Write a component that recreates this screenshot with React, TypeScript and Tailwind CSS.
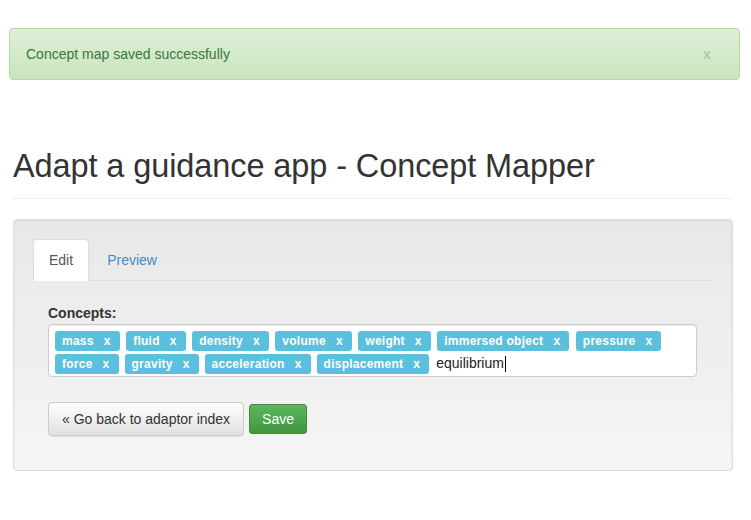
import { useState } from 'react'

const TAGS_ROW1 = ['mass', 'fluid', 'density', 'volume', 'weight', 'immersed object', 'pressure']
const TAGS_ROW2 = ['force', 'gravity', 'acceleration', 'displacement']

function Tag({ label }: { label: string }) {
  return (
    <span className="inline-flex h-5 items-center rounded-[3px] bg-[#5bc0de] pl-[7px] pr-[9px] text-[12px] font-bold leading-none tracking-[0.25px] text-white">
      {label}
      <span className="ml-[10px]">x</span>
    </span>
  )
}

export default function App() {
  const [tab, setTab] = useState('edit')

  return (
    <div className="min-h-[520px] bg-white pt-[28px] font-['Liberation_Sans',Arial,sans-serif] text-[14px] text-[#333]">
      {/* flash */}
      <div className="ml-[9px] mr-[11px] flex h-[52px] items-center justify-between rounded border border-[#b2dba1] bg-gradient-to-b from-[#dff0d8] to-[#c8e5bc] pl-[16px] pr-[28px] text-[#3c763d]">
        <span>Concept map saved successfully</span>
        <span className="text-[15px] font-bold text-[#b4c6ad]">x</span>
      </div>

      <div className="ml-[13px] mr-[18px]">
        <div className="mt-[66px] border-b border-[#eee] pb-[12px]">
          <h1 className="text-[32.5px] leading-[40px] font-normal tracking-[-0.1px] text-[#333]">Adapt a guidance app - Concept Mapper</h1>
        </div>

        <div className="mt-[20px] h-[252px] rounded border border-[#dcdcdc] bg-gradient-to-b from-[#e8e8e8] to-[#f5f5f5] p-[19px] shadow-[inset_0_1px_3px_rgba(0,0,0,0.05)]">
          <div className="flex border-b border-[#ddd]">
            <button
              onClick={() => setTab('edit')}
              className={`-mb-px h-[42px] rounded-t border px-[15px] ${tab === 'edit' ? 'border-[#ddd] border-b-transparent bg-white text-[#555]' : 'border-transparent text-[#428bca]'}`}
            >
              Edit
            </button>
            <button
              onClick={() => setTab('preview')}
              className={`-mb-px ml-[2px] h-[42px] rounded-t border px-[15px] ${tab === 'preview' ? 'border-[#ddd] border-b-transparent bg-white text-[#555]' : 'border-transparent text-[#428bca]'}`}
            >
              Preview
            </button>
          </div>

          <div className="pl-[15px] pr-[16px] pt-[22px]">
            <div className="text-[14px] font-bold leading-[20px] text-[#333]">Concepts:</div>
            <div className="mt-[1px] flex h-[53px] flex-col gap-[2px] rounded border border-[#ccc] bg-white px-[6px] pt-[6px] shadow-[inset_0_1px_1px_rgba(0,0,0,0.075)]">
              <div className="flex gap-[6.5px]">
                {TAGS_ROW1.map((t) => (
                  <Tag key={t} label={t} />
                ))}
              </div>
              <div className="flex items-center gap-[6px]">
                {TAGS_ROW2.map((t) => (
                  <Tag key={t} label={t} />
                ))}
                <span className="ml-[1px] flex items-center text-[14px] text-[#222]">
                  equilibrium<span className="ml-px h-[16px] w-px bg-black" />
                </span>
              </div>
            </div>

            <div className="mt-[25px] flex items-center gap-[5px]">
              <button className="h-[34px] rounded border border-[#ccc] bg-gradient-to-b from-white to-[#e0e0e0] px-[13px] text-[14px] text-[#333] shadow-[inset_0_1px_0_rgba(255,255,255,0.15),0_1px_1px_rgba(0,0,0,0.075)]">
                « Go back to adaptor index
              </button>
              <button className="h-[30px] rounded-[3px] border border-[#3e8f3e] bg-gradient-to-b from-[#5cb85c] to-[#419641] px-[12px] text-[14px] text-white">
                Save
              </button>
            </div>
          </div>
        </div>
      </div>
    </div>
  )
}
